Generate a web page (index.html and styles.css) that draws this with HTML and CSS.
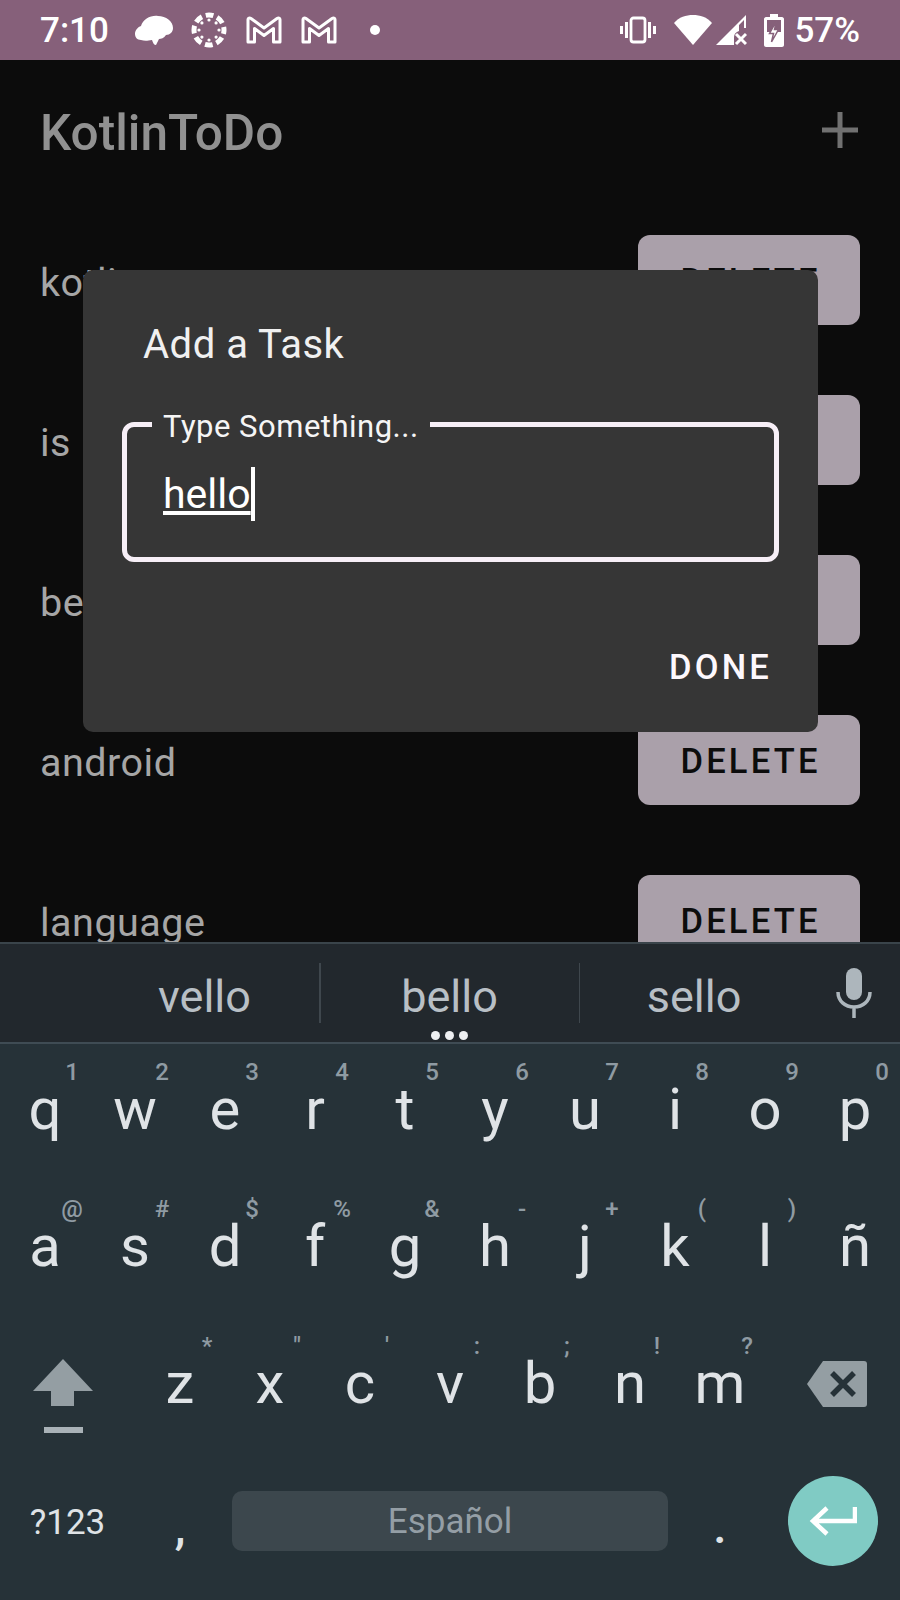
FILE: index.html
```html
<!DOCTYPE html>
<html lang="en">
<head>
    <meta charset="UTF-8">
    <title>KotlinToDo</title>
    <link rel="stylesheet" href="styles.css">
</head>
<body>
<div class="screen">
    <div class="statusbar">
        <span class="clock">7:10</span>
        <svg class="ico-brain" width="38" height="30" viewBox="0 0 38 30"><path fill="#fff" d="M0 19C0 15 3 12 6 11 8 4 16 0 23 1 31 1 38 6 38 13 38 17 35 20 31 20 29 23 26 24 24 24L21 30C19 30 18 28 17 25 12 26 9 26 6 25 2 25 0 22 0 19Z"/></svg>
        <svg class="ico-canvas" width="36" height="36" viewBox="0 0 36 36">
            <circle cx="18" cy="18" r="15" fill="none" stroke="#fff" stroke-width="5" stroke-dasharray="7.8 4" stroke-dashoffset="3.9"/>
            <g fill="#fff">
                <circle cx="18" cy="8" r="1.6"/><circle cx="18" cy="28" r="1.6"/><circle cx="8" cy="18" r="1.6"/><circle cx="28" cy="18" r="1.6"/>
                <circle cx="10.900" cy="10.900" r="1.6"/><circle cx="25.100" cy="10.900" r="1.6"/><circle cx="10.900" cy="25.100" r="1.6"/><circle cx="25.100" cy="25.100" r="1.6"/>
            </g>
        </svg>
        <svg class="ico-gmail" width="36" height="28" viewBox="0 0 36 28"><path fill="none" stroke="#fff" stroke-width="3" stroke-linejoin="round" d="M2 26V3.500C2 2 3.500 1.500 5 2.500L18 12 31 2.500C32.500 1.500 34 2 34 3.500V26H27.500V12.500L18 19.500 8.500 12.500V26Z"/></svg>
        <svg class="ico-gmail" width="36" height="28" viewBox="0 0 36 28"><path fill="none" stroke="#fff" stroke-width="3" stroke-linejoin="round" d="M2 26V3.500C2 2 3.500 1.500 5 2.500L18 12 31 2.500C32.500 1.500 34 2 34 3.500V26H27.500V12.500L18 19.500 8.500 12.500V26Z"/></svg>
        <span class="dot"></span>
        <span class="spacer"></span>
        <svg class="ico-vibrate" width="36" height="28" viewBox="0 0 36 28"><rect x="11" y="2" width="14" height="24" rx="2.500" fill="none" stroke="#fff" stroke-width="2.800"/><path fill="#fff" d="M5 6h3v16H5zM28 6h3v16h-3zM0 10h3v8H0zM33 10h3v8h-3z"/></svg>
        <svg class="ico-wifi" width="38" height="32" viewBox="0 0 38 32"><path fill="#fff" d="M0 9C5 3 12 1 19 1s14 2 19 8L19 31Z"/></svg>
        <svg class="ico-signal" width="32" height="32" viewBox="0 0 32 32"><path fill="#fff" d="M1 31 31 1V14H29V6L24 11V17C21 18 19 20 19 23V31Z"/><path fill="none" stroke="#fff" stroke-width="3" d="M21 20 31 30M31 20 21 30"/></svg>
        <svg class="ico-battery" width="20" height="33" viewBox="0 0 20 33"><path fill="#fff" fill-rule="evenodd" d="M6 0H14V3H18C19 3 20 4 20 5V31C20 32 19 33 18 33H2C1 33 0 32 0 31V5C0 4 1 3 2 3H6ZM3 6V18H17V6Z"/><path fill="#fff" stroke="#86607a" stroke-width="1.500" d="M12.500 7 5.500 19.500H9.500L7.500 28 14.500 15.500H10.500Z"/></svg>
        <span class="pct">57%</span>
    </div>

    <div class="app">
        <div class="appbar">
            <span class="app-title">KotlinToDo</span>
            <svg class="ico-plus" width="36" height="36" viewBox="0 0 36 36"><path fill="#717171" d="M15.500 0h5v15.500H36v5H20.500V36h-5V20.500H0v-5h15.500z"/></svg>
        </div>
        <div class="task-list">
            <div class="task"><span>kotlin</span><button class="btn-delete">DELETE</button></div>
            <div class="task"><span>is</span><button class="btn-delete">DELETE</button></div>
            <div class="task"><span>best</span><button class="btn-delete">DELETE</button></div>
            <div class="task"><span>android</span><button class="btn-delete">DELETE</button></div>
            <div class="task"><span>language</span><button class="btn-delete">DELETE</button></div>
        </div>
    </div>

    <div class="dialog">
        <div class="dialog-title">Add a Task</div>
        <div class="field">
            <span class="field-label">Type Something...</span>
            <span class="field-value">hello</span><span class="caret"></span>
        </div>
        <div class="dialog-actions"><span class="btn-done">DONE</span></div>
    </div>

    <div class="keyboard">
        <div class="suggestions">
            <span class="sug">vello</span>
            <span class="sug sug-mid">bello<i class="more"><b></b><b></b><b></b></i></span>
            <span class="sug">sello</span>
            <span class="sug-mic">
                <svg width="36" height="50" viewBox="0 0 36 50"><rect x="10" y="0" width="16" height="32" rx="8" fill="#adb6bc"/><path fill="none" stroke="#adb6bc" stroke-width="3.500" d="M2 24C2 33 9 39 18 39S34 33 34 24M18 38V50"/></svg>
            </span>
        </div>
        <div class="keys">
            <div class="key">q<sup>1</sup></div><div class="key">w<sup>2</sup></div><div class="key">e<sup>3</sup></div><div class="key">r<sup>4</sup></div><div class="key">t<sup>5</sup></div><div class="key">y<sup>6</sup></div><div class="key">u<sup>7</sup></div><div class="key">i<sup>8</sup></div><div class="key">o<sup>9</sup></div><div class="key">p<sup>0</sup></div>

            <div class="key">a<sup>@</sup></div><div class="key">s<sup>#</sup></div><div class="key">d<sup>$</sup></div><div class="key">f<sup>%</sup></div><div class="key">g<sup>&amp;</sup></div><div class="key">h<sup>-</sup></div><div class="key">j<sup>+</sup></div><div class="key">k<sup>(</sup></div><div class="key">l<sup>)</sup></div><div class="key">ñ</div>

            <div class="key wide shift">
                <svg width="60" height="74" viewBox="0 0 60 74"><path fill="#949ea3" d="M30 0 60 32H41V47H18V32H0Z"/><rect x="11" y="68" width="39" height="6" fill="#a9b2b7"/></svg>
            </div>
            <div class="key">z<sup>*</sup></div><div class="key">x<sup>"</sup></div><div class="key">c<sup>'</sup></div><div class="key">v<sup>:</sup></div><div class="key">b<sup>;</sup></div><div class="key">n<sup>!</sup></div><div class="key">m<sup>?</sup></div>
            <div class="key wide backspace">
                <svg width="60" height="46" viewBox="0 0 60 46"><path fill="#949ea3" d="M16 0H57C59 0 60 1 60 3V43C60 45 59 46 57 46H16L0 23Z"/><path stroke="#263238" stroke-width="5.500" d="M25 12 47 34M47 12 25 34"/></svg>
            </div>

            <div class="key wide sym">?123</div>
            <div class="key comma">,</div>
            <div class="key space"><span class="spacebar">Español</span></div>
            <div class="key comma">.</div>
            <div class="key wide enter">
                <span class="enter-btn">
                    <svg width="48" height="32" viewBox="0 0 48 32"><path fill="none" stroke="#fff" stroke-width="4.500" d="M46 2V16H5M18 3 4 16 18 29"/></svg>
                </span>
            </div>
        </div>
    </div>
</div>
</body>
</html>
```

FILE: styles.css
```css
* {
    box-sizing: border-box;
}
body {
    margin: 0;
    font-family: Roboto, "Liberation Sans", sans-serif;
    background: #0c0c0c;
}
.screen {
    position: relative;
    width: 900px;
    height: 1600px;
    overflow: hidden;
    display: flex;
    flex-direction: column;
}

/* status bar */
.statusbar {
    height: 60px;
    flex: none;
    background: #86607a;
    color: #fff;
    display: flex;
    align-items: center;
    padding: 0 40px;
}
.clock {
    font-size: 35px;
    font-weight: 500;
    width: 68px;
}
.ico-brain { margin-left: 27px; }
.ico-canvas { margin-left: 18px; }
.ico-gmail { margin-left: 19px; }
.dot {
    width: 10px;
    height: 10px;
    border-radius: 50%;
    background: #fff;
    margin-left: 33px;
}
.spacer { flex: 1; }
.ico-wifi { margin-left: 18px; }
.ico-signal { margin-left: 3px; }
.ico-battery { margin-left: 17px; }
.pct {
    font-size: 35px;
    font-weight: 500;
    margin-left: 10px;
}

/* app behind the dialog */
.app {
    height: 882px;
    flex: none;
    overflow: hidden;
    background: #0c0c0c;
}
.appbar {
    height: 175px;
    padding: 49px 42px 0 40px;
    display: flex;
    justify-content: space-between;
    align-items: flex-start;
}
.app-title {
    font-size: 49.500px;
    font-weight: 500;
    line-height: 48px;
    color: #919191;
}
.ico-plus {
    margin-top: 3px;
}
.task-list {
    display: flex;
    flex-direction: column;
    gap: 70px;
    padding: 0 40px;
}
.task {
    height: 90px;
    flex: none;
    display: flex;
    justify-content: space-between;
    align-items: center;
    font-size: 39.500px;
    letter-spacing: 0.5px;
    color: #a6a6a6;
}
.task span {
    margin-top: 4px;
}
.btn-delete {
    width: 222px;
    height: 90px;
    padding: 2px 0 0 3px;
    border: 0;
    border-radius: 12px;
    background: #aaa0aa;
    color: #0c0c0c;
    font-family: inherit;
    font-size: 34.500px;
    font-weight: 500;
    letter-spacing: 3.200px;
}

/* dialog */
.dialog {
    position: absolute;
    left: 83px;
    top: 270px;
    width: 735px;
    height: 462px;
    background: #363636;
    border-radius: 10px;
    padding: 0 39px;
    display: flex;
    flex-direction: column;
}
.dialog-title {
    font-size: 40px;
    line-height: 44px;
    margin: 53px 0 0 21px;
    color: #f0f0f0;
    letter-spacing: 0.5px;
}
.field {
    position: relative;
    height: 140px;
    margin-top: 55px;
    border: 5px solid #f7eff7;
    border-radius: 12px;
    padding: 44px 0 0 36px;
    color: #fff;
    display: flex;
    align-items: flex-start;
}
.field-label {
    position: absolute;
    left: 25px;
    top: -17px;
    padding: 0 11px;
    background: #363636;
    font-size: 31px;
    line-height: 34px;
    letter-spacing: 0.5px;
    color: #f5f5f5;
}
.field-value {
    font-size: 41px;
    line-height: 46px;
    text-decoration: underline;
    text-underline-offset: 3px;
}
.caret {
    width: 4px;
    height: 54px;
    margin-top: -4px;
    background: #fff;
}
.dialog-actions {
    display: flex;
    justify-content: flex-end;
    margin-top: 85px;
}
.btn-done {
    font-size: 34.500px;
    font-weight: 500;
    letter-spacing: 3.200px;
    line-height: 40px;
    color: #fdf8fd;
    margin-right: 7px;
}

/* keyboard */
.keyboard {
    flex: 1;
    background: #263238;
    color: #dfe3e6;
}
.suggestions {
    height: 102px;
    background: #22282d;
    border-top: 2px solid #3a444a;
    border-bottom: 2px solid #3f4c54;
    padding-left: 90px;
    display: grid;
    grid-template-columns: 229px 261px 228px 92px;
    align-items: center;
}
.sug {
    position: relative;
    top: 3px;
    text-align: center;
    font-size: 45px;
    color: #b8bfc5;
}
.sug-mid::before, .sug-mid::after {
    content: "";
    position: absolute;
    top: -7px;
    width: 1.500px;
    height: 60px;
    background: #3f474d;
}
.sug-mid::before { left: 0; }
.sug-mid::after { right: 0; }
.more {
    position: absolute;
    left: 112px;
    top: 61px;
    display: flex;
    gap: 5px;
}
.more b {
    width: 9px;
    height: 9px;
    border-radius: 50%;
    background: #eef0f2;
}
.sug-mic {
    display: flex;
    justify-content: center;
}
.keys {
    display: grid;
    grid-template-columns: repeat(20, 45px);
    grid-auto-rows: 137px;
    margin-top: 2px;
}
.key {
    position: relative;
    grid-column: span 2;
    display: flex;
    justify-content: center;
    align-items: center;
    padding-bottom: 12px;
    font-size: 58px;
    font-weight: 400;
}
.key sup {
    position: absolute;
    right: 11px;
    top: 12px;
    width: 14px;
    display: flex;
    justify-content: center;
    font-size: 24px;
    line-height: 28px;
    font-weight: 500;
    color: #8f9ba3;
}
.wide { grid-column: span 3; }
.shift {
    padding: 14px 10px 0 0;
}
.backspace {
    padding: 0 0 10px 8px;
}
.sym {
    padding-bottom: 6px;
    font-size: 35px;
    font-weight: 400;
}
.comma {
    padding: 2px 0 0;
    font-size: 48px;
    font-weight: 500;
}
.space {
    grid-column: span 10;
    padding-bottom: 9px;
}
.spacebar {
    width: 436px;
    height: 60px;
    border-radius: 10px;
    background: #3c474d;
    color: #949ea5;
    font-size: 35px;
    font-weight: 400;
    display: flex;
    justify-content: center;
    align-items: center;
}
.enter {
    padding-bottom: 10px;
}
.enter-btn {
    width: 90px;
    height: 90px;
    border-radius: 50%;
    background: #80cbc4;
    display: flex;
    justify-content: center;
    align-items: center;
}
```
